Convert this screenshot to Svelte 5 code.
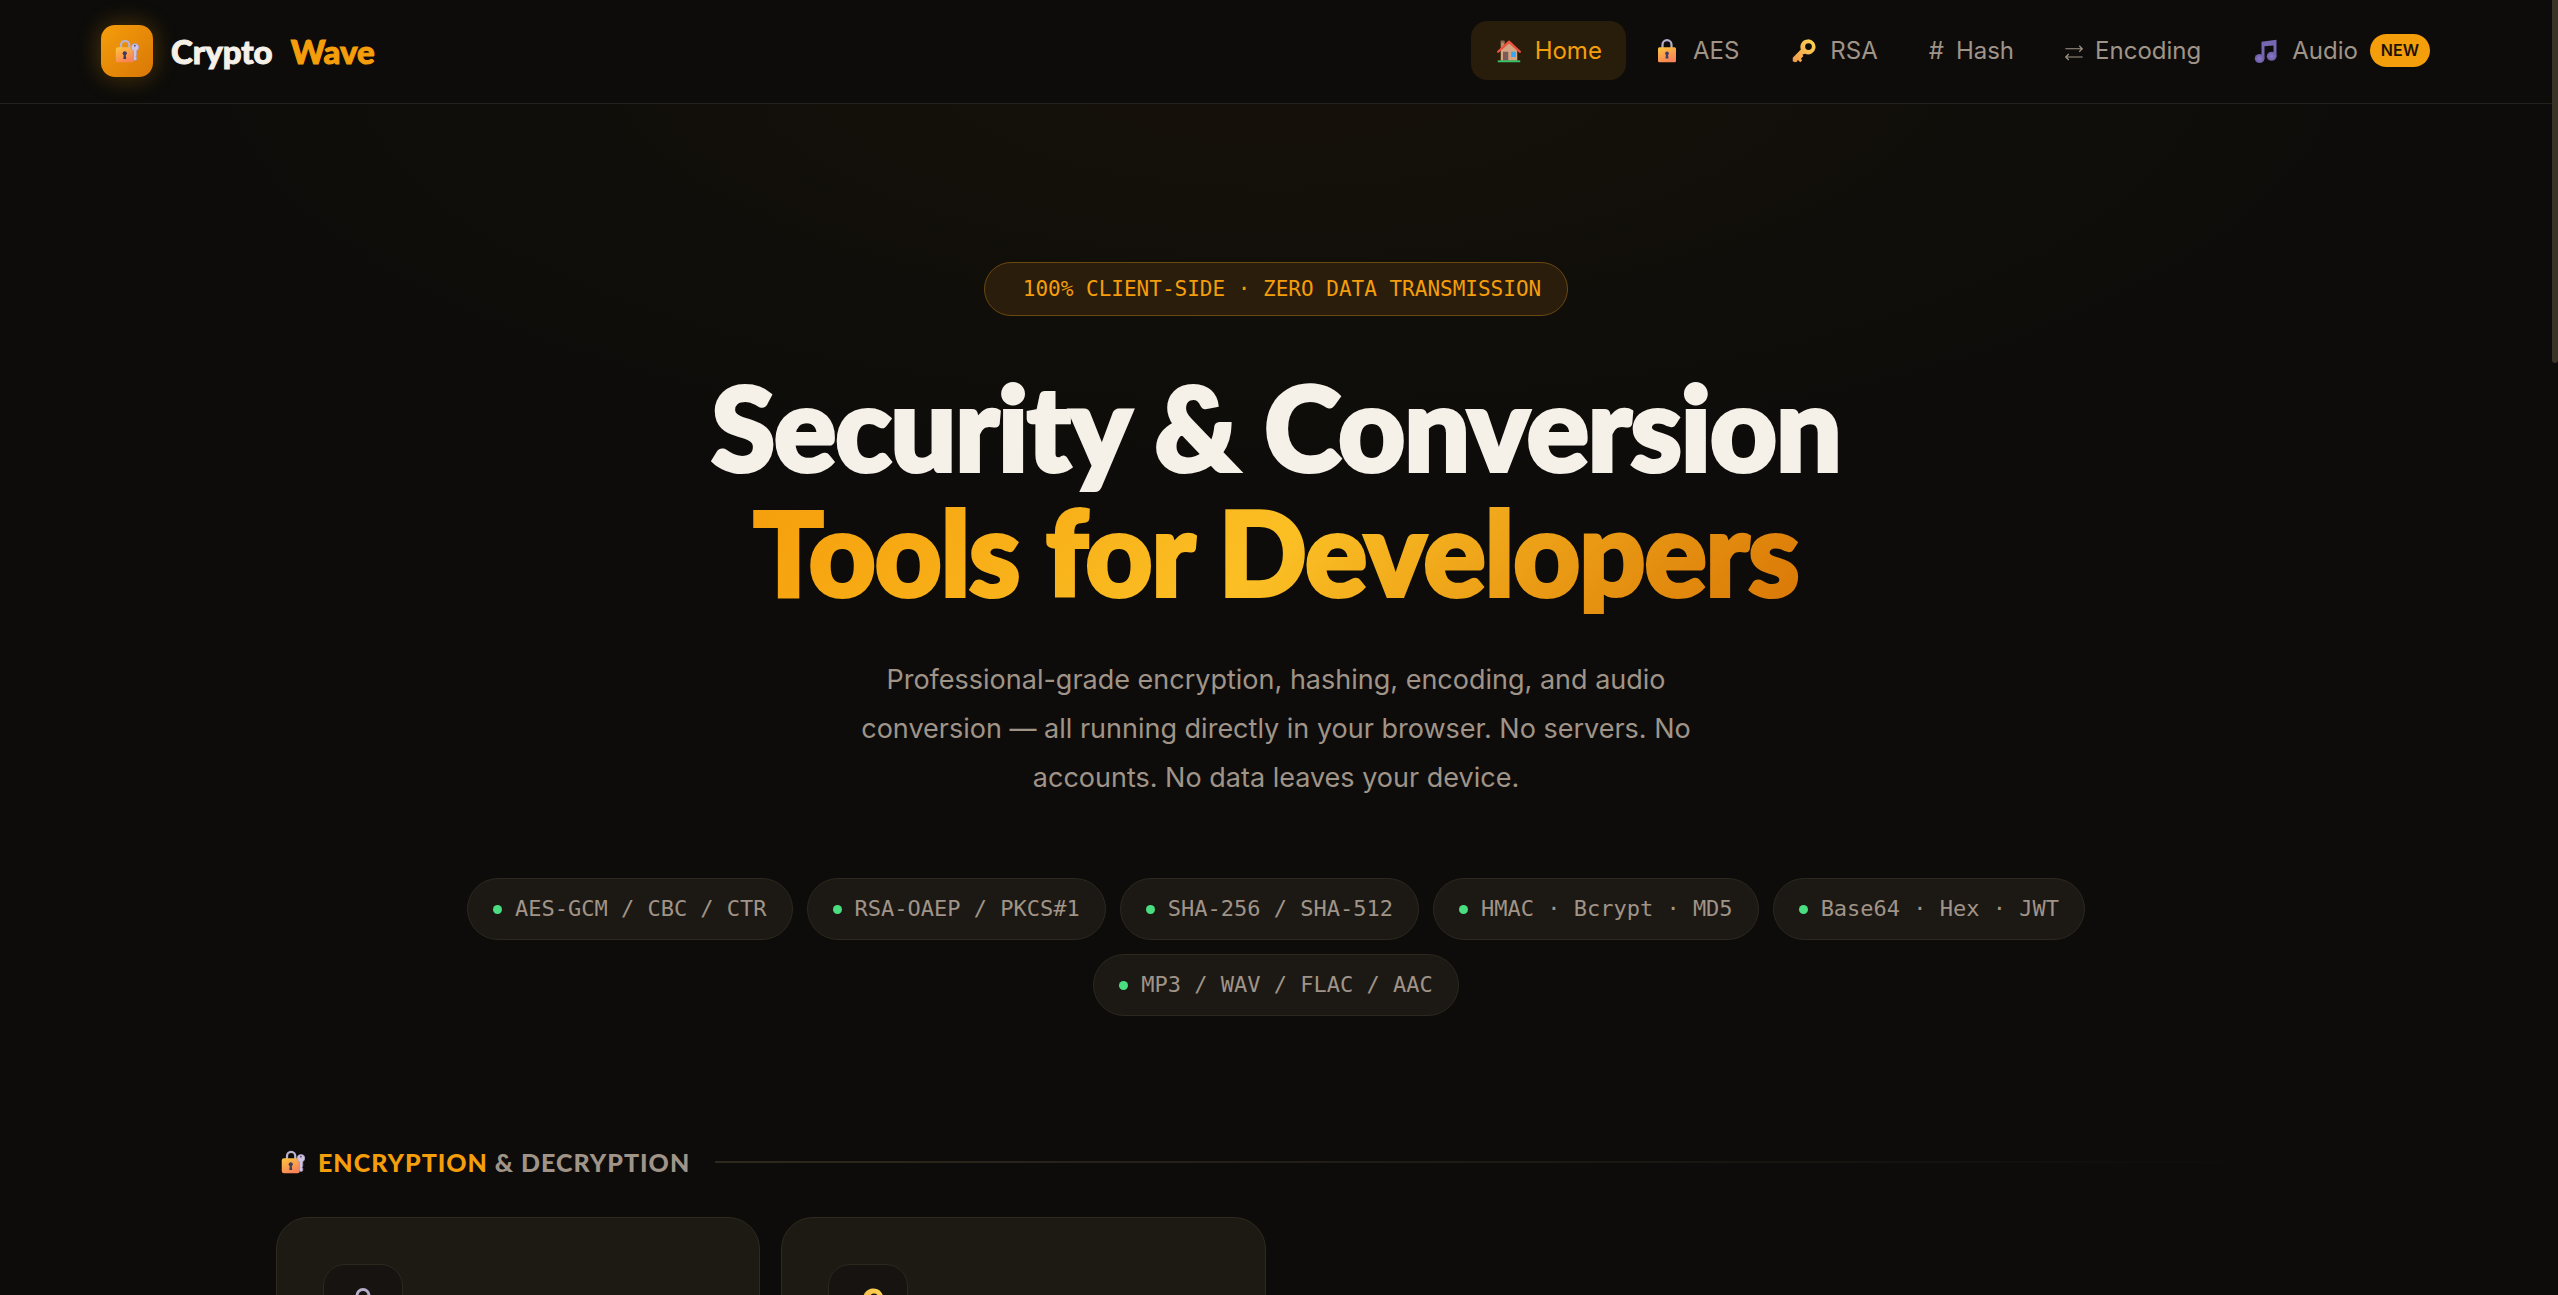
<script>
    let current = $state("Home")
    const links = [
        { name: "Home", icon: "house" },
        { name: "AES", icon: "lock" },
        { name: "RSA", icon: "key" },
        { name: "Hash", icon: "hash" },
        { name: "Encoding", icon: "arrows" },
        { name: "Audio", icon: "notes", badge: "NEW" }
    ]
    const chips = [
        "AES-GCM / CBC / CTR",
        "RSA-OAEP / PKCS#1",
        "SHA-256 / SHA-512",
        "HMAC · Bcrypt · MD5",
        "Base64 · Hex · JWT",
        "MP3 / WAV / FLAC / AAC"
    ]
    const cards = [
        { name: "AES", icon: "lock" },
        { name: "RSA", icon: "key" }
    ]
</script>

<svelte:head>
<title>Crypto Wave</title>
</svelte:head>

{#snippet icon(name)}
    <svg class="icon" viewBox="0 0 32 32" aria-hidden="true">
    {#if name === "house"}
        <path d="M5 29V15L16 5l11 10v14z" fill="#d3a583" />
        <path d="M5 3h5v8l-5 4z" fill="#b98a60" />
        <path d="M5 2h5v3H5z" fill="#8a6a55" />
        <path d="M1.500 17 16 3.500 30.500 17" fill="none" stroke="#f0503c" stroke-width="3" stroke-linecap="round" stroke-linejoin="round" />
        <path d="M8 17h7v12H8z" fill="#7d5a55" />
        <path d="M19 17h6v7h-6z" fill="#35a5f5" />
        <path d="M1 28.500h30V31H1z" fill="#35c566" />
    {:else if name === "lock"}
        <path d="M10 15V7.500a6 6 0 0 1 12 0V15" fill="none" stroke="#b5aecb" stroke-width="3" />
        <rect x="4" y="11" width="24" height="20" rx="2" fill="url(#gold)" />
        <circle cx="16" cy="19" r="2.500" fill="#433b6b" />
        <path d="M14.800 20h2.400l.8 6h-4z" fill="#433b6b" />
    {:else if name === "key"}
        <path d="M21 .500a10 10 0 0 0-9.200 13.500L1 25v4.500L4 31l3-1 .5-2.500 3.500 3.500 2.500-2.500-1.500-2.500 3-3-1-2.500 3.500-.8A10 10 0 1 0 21 .500zm1 5a4.500 4.500 0 1 1 0 9 4.500 4.500 0 0 1 0-9z" fill="url(#brass)" fill-rule="evenodd" />
    {:else if name === "notes"}
        <path d="M10 3.500 30 1v22.500h-4V8.500l-12 1.200V26h-4z" fill="#7767b0" />
        <ellipse cx="7.500" cy="26" rx="6.500" ry="6" fill="url(#plum)" />
        <ellipse cx="23.500" cy="23" rx="6.500" ry="6" fill="url(#plum)" />
    {:else if name === "lockkey"}
        <path d="M8 14V8a5.500 5.500 0 0 1 11 0v6" fill="none" stroke="#b9b2cc" stroke-width="3" />
        <rect x="1" y="11" width="24" height="20" rx="3" fill="url(#gold)" />
        <path d="M26.500 6a5 5 0 0 0-2 9.600V27l2 2 2.500-1.500v-3l-1-1.500 1-1.500v-6A5 5 0 0 0 26.500 6z" fill="#cfc3df" stroke="#9f93b8" />
        <circle cx="26.500" cy="9" r="1.200" fill="#5a5078" />
        <circle cx="13" cy="19" r="2.800" fill="#433b5b" />
        <path d="M11.800 20h2.400l.8 6.500h-4z" fill="#433b5b" />
    {:else if name === "arrows"}
        <path d="M4.500 13h22.500m-4-4 4 4-4 4M27.500 24H5m4-4-4 4 4 4" fill="none" stroke="currentColor" stroke-width="1.600" />
    {/if}
    </svg>
{/snippet}

<svg class="defs" width="0" height="0" aria-hidden="true">
    <linearGradient id="gold" x1="0" y1="0" x2=".5" y2="1">
        <stop offset="0" stop-color="#fcc63c" />
        <stop offset="1" stop-color="#f98458" />
    </linearGradient>
    <linearGradient id="brass" x1="1" y1="0" x2="0" y2="1">
        <stop offset="0" stop-color="#ffd84f" />
        <stop offset="1" stop-color="#f0984e" />
    </linearGradient>
    <radialGradient id="plum">
        <stop offset="0" stop-color="#9078c8" />
        <stop offset="1" stop-color="#6a5ca6" />
    </radialGradient>
</svg>

<div class="page">
    <header>
        <a class="brand" href="#home">
            <span class="logo">{@render icon("lockkey")}</span>
            <span>Crypto</span>
            <span class="amber">Wave</span>
        </a>
        <nav aria-label="Main">
            {#each links as link}
            <a href="#{link.name.toLowerCase()}" class:active={current === link.name} onclick={() => current = link.name}>
                {#if link.icon === "hash"}
                <span>#</span>
                {:else}
                <span class="slot {link.icon}">{@render icon(link.icon)}</span>
                {/if}
                {link.name}
                {#if link.badge}
                <span class="new">{link.badge}</span>
                {/if}
            </a>
            {/each}
        </nav>
    </header>

    <main>
        <section class="hero">
            <p class="pill">100% CLIENT-SIDE · ZERO DATA TRANSMISSION</p>
            <h1>
                <span>Security &amp; Conversion</span>
                <span class="shine">Tools for Developers</span>
            </h1>
            <p class="lead">Professional-grade encryption, hashing, encoding, and audio conversion — all running directly in your browser. No servers. No accounts. No data leaves your device.</p>
            <ul class="chips">
                {#each chips as chip}
                <li>{chip}</li>
                {/each}
            </ul>
        </section>

        <section class="tools">
            <h2>
                {@render icon("lockkey")}
                <span><span class="amber">ENCRYPTION</span> &amp; DECRYPTION</span>
            </h2>
            <div class="cards">
                {#each cards as card}
                <a class="card" href="#{card.name.toLowerCase()}" aria-label={card.name}>
                    <span class="tile">{@render icon(card.icon)}</span>
                </a>
                {/each}
            </div>
        </section>
    </main>
</div>
<div class="scrollthumb" aria-hidden="true"></div>

<style>
    :global(body) {
        margin: 0;
        background: #0d0c0a;
    }
    .page {
        box-sizing: border-box;
        height: 100vh;
        overflow: hidden;
        padding-right: 6px;
        background: radial-gradient(ellipse 1200px 440px at 50% 60px, rgba(245, 158, 11, 0.04), transparent) #0d0c0a;
        color: #a09488;
        font-family: Inter, sans-serif;
        font-size: 24px;
    }
    .defs {
        position: absolute;
    }
    .icon {
        display: block;
        flex: none;
        width: 24px;
        height: 24px;
    }
    a {
        color: inherit;
        text-decoration: none;
    }
    .amber {
        color: #f59e0b;
    }

    header {
        display: flex;
        align-items: center;
        justify-content: space-between;
        height: 101px;
        padding: 0 98px 2px 101px;
        border-bottom: 1px solid #23211b;
        background: #0d0c0a;
    }
    .brand {
        display: flex;
        align-items: center;
        gap: 18px;
        color: #f5f0e8;
        font-family: Lato, sans-serif;
        font-size: 33px;
        font-weight: 900;
        -webkit-text-stroke: 1px currentColor;
    }
    .logo {
        display: grid;
        place-items: center;
        width: 52px;
        height: 52px;
        border-radius: 14px;
        background: linear-gradient(135deg, #f59e0b, #d97706);
        box-shadow: 0 0 24px rgba(245, 158, 11, 0.3);
    }
    nav {
        display: flex;
        gap: 3px;
    }
    nav a {
        display: flex;
        align-items: center;
        gap: 12px;
        height: 59px;
        padding: 0 24px;
        border-radius: 16px;
    }
    nav a.active {
        background: #281c0b;
        color: #f59e0b;
    }
    .slot {
        display: flex;
        justify-content: center;
        width: 28px;
    }
    .arrows {
        width: 18px;
    }
    .new {
        padding: 0 11px;
        border-radius: 17px;
        background: #f59e0b;
        color: #1c1206;
        font-size: 16px;
        font-weight: 600;
        line-height: 33px;
    }

    .hero {
        display: flex;
        flex-direction: column;
        align-items: center;
        padding-top: 158px;
        text-align: center;
    }
    .pill {
        margin: 0;
        padding: 0 26px 0 38px;
        border: 1px solid #6b480f;
        border-radius: 27px;
        background: #2a1d0c;
        color: #f59e0b;
        font-family: "DejaVu Sans Mono", monospace;
        font-size: 21px;
        line-height: 52px;
    }
    h1 {
        display: flex;
        flex-direction: column;
        align-items: center;
        margin: 48px 0 0;
        color: #f5f0e8;
        font-family: Lato, sans-serif;
        font-size: 116px;
        font-weight: 900;
        line-height: 125px;
        letter-spacing: -1px;
        -webkit-text-stroke: 4px currentColor;
    }
    .shine {
        background: linear-gradient(135deg, #f59e0b, #fbbf24 50%, #d97706);
        background-clip: text;
        color: transparent;
    }
    .lead {
        max-width: 860px;
        margin: 41px 0 0;
        font-size: 27px;
        font-weight: 400;
        line-height: 49px;
    }
    .chips {
        display: flex;
        flex-wrap: wrap;
        justify-content: center;
        gap: 14px;
        max-width: 1760px;
        margin: 76px 0 0;
        padding: 0;
        list-style: none;
        font-family: "DejaVu Sans Mono", monospace;
        font-size: 22px;
        line-height: 60px;
    }
    .chips li {
        display: flex;
        align-items: center;
        gap: 13px;
        padding: 0 25px;
        border: 1px solid #2c281e;
        border-radius: 31px;
        background: #1c1914;
    }
    .chips li::before {
        content: "";
        width: 9px;
        height: 9px;
        border-radius: 50%;
        background: #4ade80;
    }

    .tools {
        max-width: 2000px;
        margin: 126px auto 0;
    }
    h2 {
        display: flex;
        align-items: center;
        gap: 13px;
        margin: 0 0 35px;
        padding-left: 5px;
        font-family: Lato, sans-serif;
        font-size: 25px;
        font-weight: 900;
        line-height: 40px;
        letter-spacing: 1px;
    }
    h2::after {
        content: "";
        flex: 1;
        height: 2px;
        margin-left: 12px;
        background: linear-gradient(90deg, #2e291e, transparent);
    }
    .cards {
        display: grid;
        grid-template-columns: repeat(4, 1fr);
        gap: 21px;
    }
    .card {
        padding: 46px;
        border: 1px solid #2e2a20;
        border-radius: 32px;
        background: #1d1a14;
    }
    .tile {
        display: grid;
        place-items: center;
        width: 78px;
        height: 78px;
        border: 1px solid #2c281f;
        border-radius: 22px;
        background: #161310;
    }
    .tile .icon {
        width: 32px;
        height: 32px;
    }

    .scrollthumb {
        position: fixed;
        top: 0;
        right: 0;
        width: 6px;
        height: 28vh;
        border-radius: 0 0 3px 3px;
        background: #3a3328;
    }
</style>
